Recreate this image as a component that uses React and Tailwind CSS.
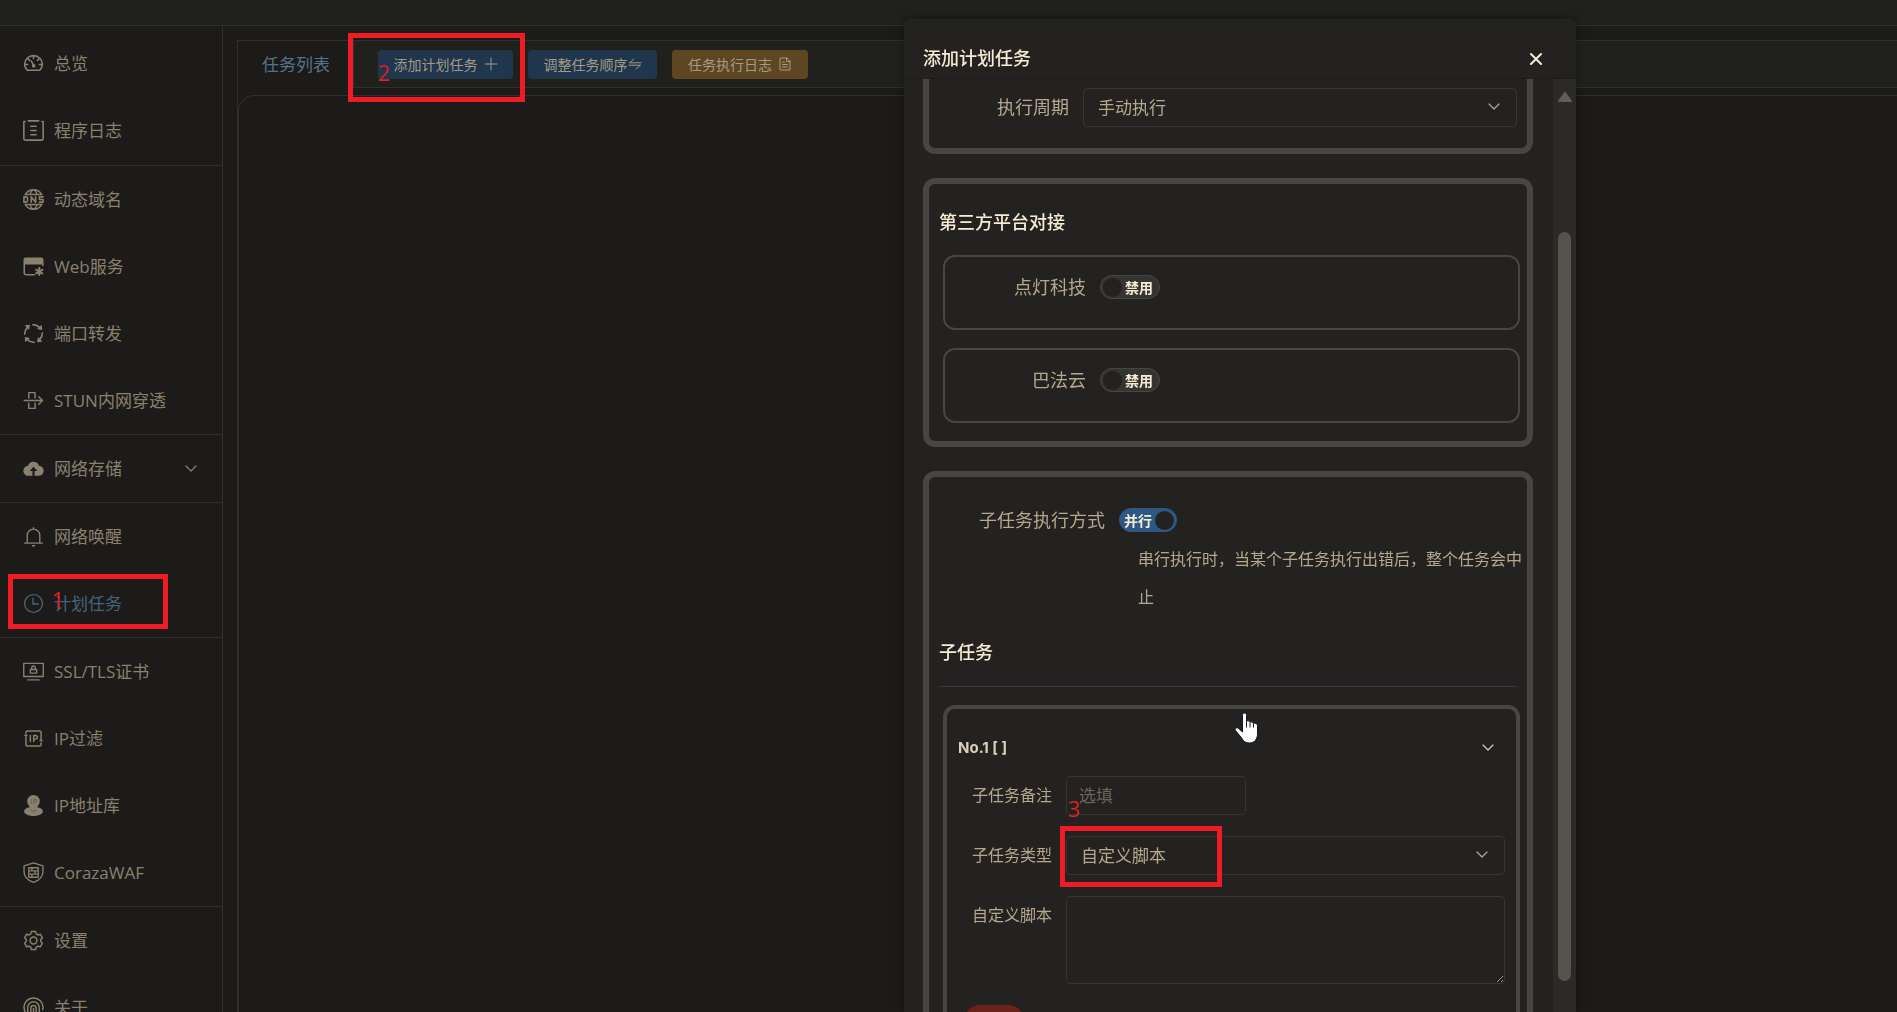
import { useState } from 'react';

const STROKE = { fill: 'none', stroke: 'currentColor', strokeLinecap: 'round', strokeLinejoin: 'round' };

const Svg = ({ children, className = 'size-[21px]', width = 1.5, box = '0 0 20 20' }) => (
  <svg className={className} viewBox={box} {...STROKE} strokeWidth={width} aria-hidden="true">
    {children}
  </svg>
);

// Sidebar glyphs
const OverviewIcon = () => (
  <Svg>
    <path d="M4.2 16.500h11.600c1.700-1.600 2.700-3.600 2.700-6A8.500 8.500 0 0 0 10 2.500a8.500 8.500 0 0 0-8.500 8c0 2.400 1 4.400 2.700 6z" />
    <path d="M10 3v2.200M4.800 5.600l1.400 1.400M15.200 5.600l-1.400 1.400M2 11h2.400M18 11h-2.400M7.800 7.600l2.400 4.200" />
    <circle cx="10.200" cy="12.200" r="1" fill="currentColor" />
  </Svg>
);

const LogIcon = () => (
  <Svg>
    <path d="M2 1.500H.8v16.200c0 .9.6 1.500 1.500 1.500h15.400c.9 0 1.500-.6 1.500-1.500V1.500H18M5 .8h10M7.500 6h5M7.500 10h5M7.500 14h5" />
  </Svg>
);

const DnsIcon = () => (
  <Svg>
    <path d="M2 5.400a9.200 9.200 0 0 1 16 0M2 14.600a9.200 9.200 0 0 0 16 0M6.600 5.400C7.400 2.700 8.600 1 10 1s2.600 1.700 3.400 4.400M6.600 14.600C7.400 17.300 8.600 19 10 19s2.600-1.700 3.400-4.400M2.500 5.200h15M2.500 14.800h15" strokeWidth="1.300" />
    <path d="M.9 7.500v5h1.600c1.200 0 1.800-.6 1.800-1.500V9c0-.9-.6-1.500-1.800-1.500zM7.800 12.500v-5l4.200 5v-5M19.200 7.500h-3.600V10h3.500v2.500h-3.500" />
  </Svg>
);

const WebIcon = () => (
  <Svg>
    <path d="M18.800 9V3.800c0-1-.7-1.600-1.600-1.600H2.800c-.9 0-1.600.6-1.600 1.600v12.400c0 1 .7 1.600 1.600 1.600h8" />
    <path d="M1.200 8.200h17.600V4c0-1-.8-1.700-1.700-1.700H2.900c-1 0-1.700.7-1.700 1.700z" fill="currentColor" stroke="none" />
    <path d="M15.500 11.500v6.600M12.600 13.200l5.800 3.300M18.400 13.200l-5.800 3.300" strokeWidth="2" />
  </Svg>
);

const ForwardIcon = () => (
  <Svg width={1.6}>
    {[0, 90, 180, 270].map((angle) => (
      <g key={angle} transform={`rotate(${angle} 10 10)`}>
        <path d="M1.600 10.500c0-2.600 1-4.600 2.600-6.300" />
        <path d="M1.600 2.200 6.600 1.600 5.800 6.600z" fill="currentColor" stroke="none" />
      </g>
    ))}
  </Svg>
);

const TunnelIcon = () => (
  <Svg width={1.4}>
    <path d="M1.200 10h17.200M15 6.500l3.600 3.500-3.600 3.500M5.500 7.500v-5h6v5M5.500 12.500v5h6v-5" />
  </Svg>
);

const CloudIcon = () => (
  <Svg>
    <path
      d="M15.300 7.400A5.600 5.600 0 0 0 4.700 7.400 4.800 4.800 0 0 0 5.600 17H9v-4.600H6.400L10 8.400l3.600 4H11V17h3.400a4.800 4.800 0 0 0 .9-9.600z"
      fill="currentColor"
      stroke="none"
    />
  </Svg>
);

const BellIcon = () => (
  <Svg width={1.3}>
    <path d="M1.500 16.300h17M4 16V9a6 6 0 0 1 12 0v7M10 3V1.500M9 18.800h2" />
  </Svg>
);

const ClockIcon = () => (
  <Svg width={1.3}>
    <circle cx="10" cy="10" r="8.500" />
    <path d="M9.500 5v5.500h5" />
  </Svg>
);

const CertIcon = () => (
  <Svg width={1.3}>
    <path d="M.7 2.200h18.600v12.600H.7zM4.500 18h11M7 11.500h6V8.100H7zM8.300 7.900V6.500a1.700 1.700 0 0 1 3.400 0v1.400" />
  </Svg>
);

const IpFilterIcon = () => (
  <Svg width={1.4}>
    <path d="M2.800 5V4c0-.8.4-1.200 1.200-1.200h12c.8 0 1.200.4 1.200 1.200v7M17.200 14v2c0 .8-.4 1.200-1.200 1.200H4c-.8 0-1.200-.4-1.200-1.200V8M1.800 7h2M16.200 12h2" />
    <path d="M7 7.200v5.600M10.200 12.800V7.200h1.800a1.600 1.600 0 0 1 0 3.400h-1.800" />
  </Svg>
);

const IpDbIcon = () => (
  <Svg>
    <path
      d="M10 0a6 6 0 0 0-6 6c0 2.200 1.200 3.800 2.600 5.600C3 12 1 13.500 1 15.500 1 18 5 20 10 20s9-2 9-4.500c0-2-2-3.500-5.600-3.900C14.800 9.800 16 8.200 16 6a6 6 0 0 0-6-6z"
      fill="currentColor"
      stroke="none"
    />
    <path d="M8 4v4M10.500 8V4h1.300a1 1 0 0 1 0 2.300h-1.300M7.500 14.500c1.500 1 3.500 1 5 0" stroke="#6b6456" strokeWidth="1" />
  </Svg>
);

const WafIcon = () => (
  <Svg width={1.3}>
    <path d="M10 .8 1 3.600V9c0 5 3.600 8.500 9 10.400C15.400 17.500 19 14 19 9V3.600z" />
    <path d="M5.500 5.500h9v9h-9zM5.500 8.500h9M5.500 11.500h9M8.500 5.500v3M11.500 8.500v3M8.500 11.500v3" />
  </Svg>
);

const GearIcon = () => (
  <Svg width={1.4}>
    <circle cx="10" cy="10" r="3.300" />
    <path d="M8 1.500h4l.6 2.200 1.700 1 2.200-.7 2 3.400-1.600 1.700v1.900l1.600 1.600-2 3.400-2.200-.6-1.700 1-.6 2.200H8l-.6-2.200-1.700-1-2.200.6-2-3.400L3.100 11V9.100L1.500 7.400l2-3.400 2.200.7 1.700-1z" />
  </Svg>
);

const FingerprintIcon = () => (
  <Svg width={1.4}>
    <path d="M3 15.500A9 9 0 1 1 18.800 12M5.200 17c-.6-2-.9-4.500-.7-7a5.500 5.500 0 0 1 11 0v5M8 18.500c-.5-3-.7-6-.5-8a2.500 2.500 0 0 1 5 0V18M10 11v8" />
  </Svg>
);

const ChevronDown = ({ className }) => (
  <Svg className={className} width={1.2} box="0 0 14 14">
    <path d="m2 4 5 5 5-5" />
  </Svg>
);

const MENU_GROUPS = [
  [
    { label: '总览', Icon: OverviewIcon },
    { label: '程序日志', Icon: LogIcon }
  ],
  [
    { label: '动态域名', Icon: DnsIcon },
    { label: 'Web服务', Icon: WebIcon },
    { label: '端口转发', Icon: ForwardIcon },
    { label: 'STUN内网穿透', Icon: TunnelIcon }
  ],
  [{ label: '网络存储', Icon: CloudIcon, expandable: true }],
  [
    { label: '网络唤醒', Icon: BellIcon },
    { label: '计划任务', Icon: ClockIcon, active: true, step: '1' }
  ],
  [
    { label: 'SSL/TLS证书', Icon: CertIcon },
    { label: 'IP过滤', Icon: IpFilterIcon },
    { label: 'IP地址库', Icon: IpDbIcon },
    { label: 'CorazaWAF', Icon: WafIcon }
  ],
  [
    { label: '设置', Icon: GearIcon },
    { label: '关于', Icon: FingerprintIcon }
  ]
];

// Red frame and number that point out a step of the guide
const Callout = ({ step, frame, number }) => (
  <>
    <span className={`pointer-events-none absolute z-30 border-[5px] border-[#ee1c24] ${frame}`} />
    <span className={`pointer-events-none absolute z-30 text-[22px] leading-6 text-[#ee1c24] ${number}`}>{step}</span>
  </>
);

const Sidebar = () => (
  <aside className="w-[223px] shrink-0 border-r border-[#302f2c] pt-1">
    <nav>
      {MENU_GROUPS.map((group, i) => (
        <ul key={i} className="border-b border-[#302f2c] first:pb-px">
          {group.map(({ label, Icon, active, expandable, step }) => (
            <li key={label} className="relative">
              <a
                href="#"
                className={`flex h-[67px] items-center gap-2.5 pl-[23px] pr-6 text-[17px] ${active ? 'text-[#46637a]' : 'text-[#8a8070]'}`}
              >
                <Icon />
                <span className="flex-1">{label}</span>
                {expandable && <ChevronDown className="size-3.5" />}
              </a>
              {step && <Callout step={step} frame="left-2 top-1 h-[55px] w-40" number="left-[52px] top-[17px]" />}
            </li>
          ))}
        </ul>
      ))}
    </nav>
  </aside>
);

const Toolbar = () => (
  <div className="flex h-12 border-t border-[#302f2c]">
    <h1 className="flex w-[115px] shrink-0 items-center pl-6 text-[17px] text-[#55748c]">任务列表</h1>
    <div className="flex flex-1 items-center gap-[15px] border-b border-l border-[#302f2c] bg-[#20211c] pl-6 text-[14px] text-[#a39a88]">
      <div className="relative">
        <button className="flex h-[29px] w-[135px] items-center justify-center gap-1.5 rounded bg-[#1f364c]">
          添加计划任务
          <Svg className="size-3.5" width={1} box="0 0 14 14">
            <path d="M7 1v12M1 7h12" />
          </Svg>
        </button>
        <Callout step="2" frame="-left-[30px] -top-[17px] h-[69px] w-[177px]" number="left-0 top-2.5" />
      </div>
      <button className="flex h-[29px] w-[129px] items-center justify-center rounded bg-[#1f364c]">
        调整任务顺序
        <Svg className="size-3.5" width={1} box="0 0 14 14">
          <path d="M6 2 1.500 5.800h11.500M1 8.200h11.500L8 12" />
        </Svg>
      </button>
      <button className="flex h-[29px] w-[136px] items-center justify-center gap-1.5 rounded bg-[#5f4622]">
        任务执行日志
        <Svg className="size-3.5" width={1} box="0 0 14 14">
          <path d="M8.500 1H2v12h10V4.500zM8.500 1v3.500H12M4.500 5h2M4.500 7.500h5M4.500 10h5" />
        </Svg>
      </button>
    </div>
  </div>
);

const Switch = ({ id, checked, onChange, onText, offText }) => (
  <label
    className={`relative flex h-6 cursor-pointer items-center gap-px rounded-full border text-[14px] font-bold text-[#f6ecd6] ${
      checked ? 'w-[58px] flex-row-reverse border-[#2e5884] bg-[#2e5884]' : 'w-[60px] border-[#474640] bg-[#353430]'
    }`}
  >
    <input
      id={id}
      type="checkbox"
      role="switch"
      className="sr-only"
      checked={checked}
      onChange={(e) => onChange(e.target.checked)}
    />
    <span className="mx-0.5 size-[19px] shrink-0 rounded-full bg-[#232220]" />
    <span>{checked ? onText : offText}</span>
  </label>
);

const Select = ({ id, value, className = '' }) => (
  <div className={`relative flex-1 ${className}`}>
    <select
      id={id}
      defaultValue={value}
      className="h-[39px] w-full appearance-none rounded border border-[#363532] bg-transparent pl-3.5 pr-10 text-[17px] text-[#b5a88f]"
    >
      <option>{value}</option>
    </select>
    <ChevronDown className="pointer-events-none absolute right-4 top-3 size-3.5 text-[#b5a88f]" />
  </div>
);

const Panel = ({ children, className = '' }) => (
  <section className={`rounded-[12px] border-6 border-[#474640] ${className}`}>{children}</section>
);

const PLATFORMS = [
  { id: 'blinker', label: '点灯科技' },
  { id: 'bemfa', label: '巴法云' }
];

const FIELD_LABEL = 'w-[94px] shrink-0 text-right text-[16px] leading-[39px] text-[#b5a88f]';

const SubTask = () => (
  <div className="ml-[14px] mr-[7px] mt-[18px] rounded-[12px] border-4 border-[#474640] pb-10 pl-[11px] pr-[11px] pt-[21px]">
    <button className="flex h-9 w-full items-center justify-between pr-2.5 text-[15px] font-bold text-[#dbcfb8]">
      <span className="font-['Inter']">No.1 [ ]</span>
      <ChevronDown className="size-3.5" />
    </button>
    <div className="mt-2.5 flex flex-col gap-[21px]">
      <div className="flex gap-[14px]">
        <label htmlFor="remark" className={FIELD_LABEL}>
          子任务备注
        </label>
        <input
          id="remark"
          placeholder="选填"
          className="h-[39px] w-[180px] rounded border border-[#363532] bg-transparent px-3 text-[17px] text-[#b5a88f] placeholder:text-[#6d675b]"
        />
      </div>
      <div className="relative flex gap-[14px]">
        <label htmlFor="kind" className={FIELD_LABEL}>
          子任务类型
        </label>
        <Select id="kind" value="自定义脚本" />
        <Callout step="3" frame="left-[102px] -top-2.5 h-[61px] w-[162px]" number="left-[110px] -top-10" />
      </div>
      <div className="flex gap-[14px]">
        <label htmlFor="script" className={FIELD_LABEL}>
          自定义脚本
        </label>
        <textarea
          id="script"
          className="h-[88px] flex-1 rounded border border-[#363532] bg-transparent px-3 py-2 text-[#b5a88f] [color-scheme:dark]"
        />
      </div>
    </div>
    <button aria-label="删除子任务" className="ml-[6px] mt-[21px] h-8 w-[60px] rounded-full bg-[#6b221a]" />
  </div>
);

const TaskDialog = () => {
  const [enabled, setEnabled] = useState({ blinker: false, bemfa: false });
  const [parallel, setParallel] = useState(true);

  return (
    <div className="fixed inset-0 z-10 flex justify-end overflow-hidden pr-[321px] pt-[19px]">
      <div
        role="dialog"
        aria-labelledby="dialog-title"
        className="flex w-[672px] flex-col rounded-t-md bg-[#232220] shadow-[0_0_12px_rgba(0,0,0,0.4)]"
      >
        <header className="flex h-[60px] shrink-0 items-center justify-between border-b border-[#1e1d1b] pl-[19px] pr-[33px] pt-5 text-[#f6ecd6]">
          <h2 id="dialog-title" className="text-[18px] font-medium">
            添加计划任务
          </h2>
          <button aria-label="关闭">
            <Svg className="size-3.5" width={2} box="0 0 14 14">
              <path d="m2 2 10 10M12 2 2 12" />
            </Svg>
          </button>
        </header>

        <div className="flex min-h-0 flex-1">
          <div className="min-w-0 flex-1 overflow-hidden pl-[19px] pr-5">
            <Panel className="rounded-t-none border-t-0 pb-[21px] pr-[10px] pt-[9px]">
              <div className="flex gap-[14px]">
                <label htmlFor="cycle" className="w-[140px] shrink-0 text-right text-[18px] leading-[39px] text-[#b5a88f]">
                  执行周期
                </label>
                <Select id="cycle" value="手动执行" />
              </div>
            </Panel>

            <Panel className="mt-6 pb-[18px] pl-[14px] pr-[7px] pt-6">
              <h3 className="-ml-1 text-[18px] font-medium leading-7 text-[#f6ecd6]">第三方平台对接</h3>
              <div className="mt-[19px] flex flex-col gap-[18px]">
                {PLATFORMS.map(({ id, label }) => (
                  <div key={id} className="flex h-[75px] gap-[14px] rounded-[12px] border-2 border-[#474640] pt-[18px]">
                    <label htmlFor={id} className="w-[141px] text-right text-[18px] leading-6 text-[#b5a88f]">
                      {label}
                    </label>
                    <Switch
                      id={id}
                      checked={enabled[id]}
                      onChange={(value) => setEnabled({ ...enabled, [id]: value })}
                      onText="启用"
                      offText="禁用"
                    />
                  </div>
                ))}
              </div>
            </Panel>

            <Panel className="mt-6 pt-[31px]">
              <div className="flex gap-[14px]">
                <label htmlFor="mode" className="w-[176px] text-right text-[18px] leading-6 text-[#b5a88f]">
                  子任务执行方式
                </label>
                <Switch id="mode" checked={parallel} onChange={setParallel} onText="并行" offText="串行" />
              </div>
              <p className="ml-[209px] mt-2 text-[16px] leading-[38px] text-[#b5a88f]">
                串行执行时，当某个子任务执行出错后，整个任务会中止
              </p>
              <h3 className="ml-2.5 mt-[22px] text-[18px] font-medium leading-7 text-[#f6ecd6]">子任务</h3>
              <hr className="mx-2.5 mt-5 border-[#38384a]" />
              <SubTask />
            </Panel>
          </div>

          {/* Scroll track */}
          <div className="flex w-[23px] shrink-0 flex-col items-center bg-[#2b2a27] pb-[31px] pt-[13px]">
            <svg className="h-2.5 w-[14px]" viewBox="0 0 14 10" fill="#605e58" aria-hidden="true">
              <path d="M6 .6a1.300 1.300 0 0 1 2 0l5.700 8c.5.800 0 1.400-.7 1.400H1c-.7 0-1.200-.6-.7-1.400z" />
            </svg>
            <div className="mt-[130px] w-[13px] flex-1 rounded-full bg-[#54534d]" />
          </div>
        </div>
      </div>
    </div>
  );
};

const HandCursor = () => (
  <svg className="pointer-events-none fixed left-[1234px] top-[712px] z-30 h-8 w-[26px]" viewBox="0 0 26 32" aria-hidden="true">
    <path
      d="M8.500 3.200c0-2.900 4-2.900 4 0v6.300c.9-1.200 3.300-.8 3.500.9 1-1 3.200-.6 3.500 1.200 1.200-.9 4-.4 4 2v8c0 5.400-2.800 9.400-8 9.400-4.500 0-6.300-2.200-8.300-5.700L1.500 18.600c-1.200-2.200 1.300-3.700 3-2.200l4 3.600z"
      fill="#ffffff"
      stroke="#15152a"
      strokeWidth="1"
    />
    <path d="M12.500 10v5.500M16 11v4.500M19.500 12v3.500" stroke="#15152a" strokeWidth="1" />
  </svg>
);

export default function App() {
  return (
    <div className="flex h-screen flex-col overflow-hidden bg-[#1c1b19] font-['Open_Sans','Noto_Sans_CJK_SC',sans-serif]">
      <div className="h-[26px] shrink-0 border-b border-[#302f2c] bg-[#20211c]" />
      <div className="flex min-h-0 flex-1">
        <Sidebar />
        <main className="flex min-w-0 flex-1 flex-col pl-[14px] pt-[14px]">
          <div className="flex flex-1 flex-col border-l border-[#302f2c]">
            <Toolbar />
            <div className="mt-[7px] flex-1 rounded-tl-[16px] border-l border-t border-[#302f2c]" />
          </div>
        </main>
      </div>
      <TaskDialog />
      <HandCursor />
    </div>
  );
}
